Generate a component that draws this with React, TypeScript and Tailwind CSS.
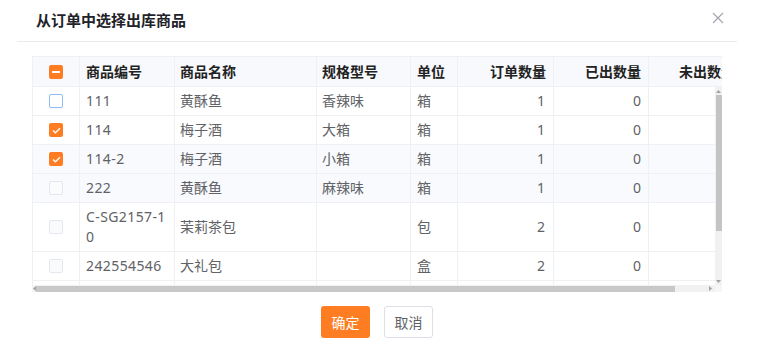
import React from "react";

type Row = {
  code: string;
  name: string;
  spec: string;
  unit: string;
  qty: string;
  out: string;
  state: "hover" | "checked" | "disabled" | "none";
  bg?: boolean;
  tall?: boolean;
};

const rows: Row[] = [
  { code: "111", name: "黄酥鱼", spec: "香辣味", unit: "箱", qty: "1", out: "0", state: "hover" },
  { code: "114", name: "梅子酒", spec: "大箱", unit: "箱", qty: "1", out: "0", state: "checked" },
  { code: "114-2", name: "梅子酒", spec: "小箱", unit: "箱", qty: "1", out: "0", state: "checked", bg: true },
  { code: "222", name: "黄酥鱼", spec: "麻辣味", unit: "箱", qty: "1", out: "0", state: "disabled", bg: true },
  { code: "C-SG2157-10", name: "茉莉茶包", spec: "", unit: "包", qty: "2", out: "0", state: "disabled", tall: true },
  { code: "242554546", name: "大礼包", spec: "", unit: "盒", qty: "2", out: "0", state: "disabled" },
  { code: "", name: "", spec: "", unit: "", qty: "", out: "", state: "none" },
];

function Checkbox({ state }: { state: Row["state"] | "indeterminate" }) {
  if (state === "none") return null;
  if (state === "indeterminate")
    return (
      <span className="flex h-[14px] w-[14px] items-center justify-center rounded-[2px] bg-[#ff7d22]">
        <span className="h-[2px] w-[8px] bg-white" />
      </span>
    );
  if (state === "checked")
    return (
      <span className="flex h-[14px] w-[14px] items-center justify-center rounded-[2px] bg-[#ff7d22]">
        <svg width="9" height="7" viewBox="0 0 9 7" fill="none">
          <path d="M1 3.6 L3.4 5.8 L8 1.2" stroke="white" strokeWidth="1.3" />
        </svg>
      </span>
    );
  if (state === "hover")
    return <span className="block h-[14px] w-[14px] rounded-[2px] border border-[#8fbdf3] bg-white" />;
  return <span className="block h-[14px] w-[14px] rounded-[2px] border border-[#e4e7ed] bg-[#fafbfc]" />;
}

const widths = ["w-[47px]", "w-[95px]", "w-[142px]", "w-[94px]", "w-[47px]", "w-[96px]", "w-[95px]", "w-[97px]"];

export default function App() {
  return (
    <div className="h-[354px] w-[774px] overflow-hidden bg-white font-['Noto_Sans','Noto_Sans_CJK_SC',sans-serif]">
      <div className="ml-[17px] w-[720px]">
        {/* dialog header */}
        <div className="flex h-[42px] items-start justify-between border-b border-[#e8eaee] pl-[19px] pr-[13px] pt-[10px]">
          <div className="text-[15px] font-bold leading-[20px] text-[#1f2329]">从订单中选择出库商品</div>
          <svg className="mt-[2px]" width="12" height="12" viewBox="0 0 12 12" fill="none">
            <path d="M1 1 L11 11 M11 1 L1 11" stroke="#a0a4ab" strokeWidth="1.1" />
          </svg>
        </div>

        {/* body */}
        <div className="px-[15px] pt-[14px]">
          <div className="w-[690px]">
            {/* table header */}
            <div className="flex h-[31px] w-[690px] overflow-hidden border-b border-l border-t border-[#eef0f4] bg-[#f7f9fc] text-[14px] font-bold leading-[20px] text-[#222]">
              <div className={`${widths[0]} flex shrink-0 items-center justify-center border-r border-[#eef0f4]`}>
                <Checkbox state="indeterminate" />
              </div>
              <div className={`${widths[1]} flex shrink-0 items-center border-r border-[#eef0f4] pl-[6px]`}>商品编号</div>
              <div className={`${widths[2]} flex shrink-0 items-center border-r border-[#eef0f4] pl-[5px]`}>商品名称</div>
              <div className={`${widths[3]} flex shrink-0 items-center border-r border-[#eef0f4] pl-[5px]`}>规格型号</div>
              <div className={`${widths[4]} flex shrink-0 items-center border-r border-[#eef0f4] pl-[6px]`}>单位</div>
              <div className={`${widths[5]} flex shrink-0 items-center justify-end border-r border-[#eef0f4] pr-[7px]`}>订单数量</div>
              <div className={`${widths[6]} flex shrink-0 items-center justify-end border-r border-[#eef0f4] pr-[7px]`}>已出数量</div>
              <div className={`${widths[7]} flex shrink-0 items-center justify-end border-r border-[#eef0f4] pr-[10px]`}>未出数量</div>
            </div>

            {/* rows + vertical scrollbar */}
            <div className="flex h-[198px]">
              <div className="h-[198px] w-[683px] overflow-hidden border-l border-[#eef0f4] text-[14px] leading-[20px] text-[#606266]">
                {rows.map((r, i) => (
                  <div
                    key={i}
                    className={`flex border-b border-[#eef0f4] ${r.bg ? "bg-[#f8fafd]" : "bg-white"} ${r.tall ? "h-[49px]" : "h-[29px]"}`}
                  >
                    <div className={`${widths[0]} flex shrink-0 items-center justify-center border-r border-[#eef0f4]`}>
                      <Checkbox state={r.state} />
                    </div>
                    <div className={`${widths[1]} flex shrink-0 items-center break-all border-r border-[#eef0f4] pl-[6px] pr-[6px] tracking-[0.4px]`}>
                      {r.code}
                    </div>
                    <div className={`${widths[2]} flex shrink-0 items-center border-r border-[#eef0f4] pl-[5px]`}>{r.name}</div>
                    <div className={`${widths[3]} flex shrink-0 items-center border-r border-[#eef0f4] pl-[5px]`}>{r.spec}</div>
                    <div className={`${widths[4]} flex shrink-0 items-center border-r border-[#eef0f4] pl-[6px]`}>{r.unit}</div>
                    <div className={`${widths[5]} flex shrink-0 items-center justify-end border-r border-[#eef0f4] pr-[8px]`}>{r.qty}</div>
                    <div className={`${widths[6]} flex shrink-0 items-center justify-end border-r border-[#eef0f4] pr-[7px]`}>{r.out}</div>
                    <div className={`${widths[7]} flex shrink-0 items-center justify-end pr-[10px]`} />
                  </div>
                ))}
              </div>
              <div className="flex h-[198px] w-[7px] flex-col items-center bg-[#f1f1f1]">
                <div className="flex h-[8px] items-center justify-center">
                  <svg width="5" height="3" viewBox="0 0 5 3">
                    <path d="M0 3 L2.5 0 L5 3 Z" fill="#a3a3a3" />
                  </svg>
                </div>
                <div className="h-[136px] w-[6px] bg-[#c4c4c4]" />
                <div className="flex-1" />
                <div className="flex h-[8px] items-center justify-center">
                  <svg width="5" height="3" viewBox="0 0 5 3">
                    <path d="M0 0 L2.5 3 L5 0 Z" fill="#a3a3a3" />
                  </svg>
                </div>
              </div>
            </div>

            {/* horizontal scrollbar */}
            <div className="flex h-[7px] w-[690px] items-center bg-[#f1f1f1]">
              <div className="flex h-[7px] w-[4px] items-center justify-center">
                <svg width="3" height="5" viewBox="0 0 3 5">
                  <path d="M3 0 L0 2.5 L3 5 Z" fill="#a3a3a3" />
                </svg>
              </div>
              <div className="h-[6px] w-[639px] bg-[#c8c8c8]" />
              <div className="flex-1" />
              <div className="flex h-[7px] w-[10px] items-center justify-center">
                <svg width="3" height="5" viewBox="0 0 3 5">
                  <path d="M0 0 L3 2.5 L0 5 Z" fill="#a3a3a3" />
                </svg>
              </div>
              <div className="h-[7px] w-[7px] bg-[#f6f6f6]" />
            </div>
          </div>
        </div>

        {/* footer */}
        <div className="flex justify-center gap-[14px] pt-[14px]">
          <button className="h-[32px] w-[49px] rounded-[3px] bg-[#ff7d22] text-[14px] text-white">确定</button>
          <button className="h-[32px] w-[49px] rounded-[3px] border border-[#dcdfe6] bg-white text-[14px] text-[#606266]">
            取消
          </button>
        </div>
      </div>
    </div>
  );
}
